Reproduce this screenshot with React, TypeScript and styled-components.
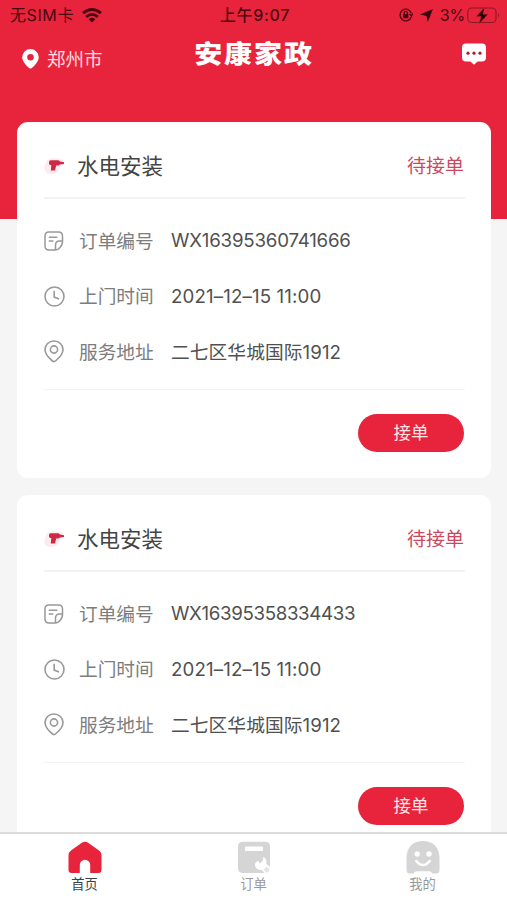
import React from 'react';
import styled, { createGlobalStyle } from 'styled-components';

const Global = createGlobalStyle`
  * { box-sizing: border-box; }
  body { margin: 0; background: #f5f5f5; overflow: hidden; font-family: Inter, "Noto Sans CJK SC", sans-serif; }
  svg { display: block; flex: none; }
`;

const Screen = styled.div`
  height: 900px;
  display: flex;
  flex-direction: column;
  overflow: hidden;
  background: linear-gradient(#e7243b 0 219px, #f5f5f5 219px);
`;
const StatusBar = styled.div`
  height: 30px;
  flex: none;
  display: grid;
  grid-template-columns: 1fr auto 1fr;
  align-items: center;
  padding: 0 7px 0 10px;
  font-size: 16px;
  line-height: 28px;
  color: #4b0711;
`;
const StatusGroup = styled.div<{ $end?: boolean }>`
  display: flex;
  align-items: center;
  justify-content: ${p => (p.$end ? 'flex-end' : 'flex-start')};
  gap: 7px;
`;
const Carrier = styled.span`
  width: 65px;
  white-space: nowrap;
  letter-spacing: 0.6px;
`;
const Charge = styled.span`
  display: flex;
  align-items: center;
  gap: 2px;
  letter-spacing: -0.2px;
`;
const Clock = styled.div`
  font-weight: 500;
  font-size: 16px;
  letter-spacing: 0.7px;
`;
const Header = styled.header`
  height: 92px;
  flex: none;
  display: grid;
  grid-template-columns: 1fr auto 1fr;
  align-items: start;
  padding: 7px 21px 0 22px;
  color: #fff;
`;
const City = styled.div`
  display: flex;
  align-items: center;
  gap: 8px;
  padding-top: 8px;
  font-size: 18.5px;
  line-height: 28px;
  color: #ffdde0;
`;
const Brand = styled.h1`
  margin: 0;
  font-size: 28px;
  line-height: 34px;
  font-weight: 900;
  letter-spacing: 1.9px;
  transform: scaleY(0.88);
`;
const Message = styled.div`
  justify-self: end;
  padding-top: 6px;
`;
const Orders = styled.main`
  flex: 1;
  min-height: 0;
  overflow: hidden;
  display: flex;
  flex-direction: column;
  gap: 17px;
  padding: 0 16px 0 17px;
`;
const Card = styled.article`
  height: 356px;
  flex: none;
  padding: 0 26px 0 27px;
  border-radius: 11px;
  background: #fff;
`;
const CardHead = styled.div`
  height: 77px;
  display: flex;
  align-items: center;
  padding-top: 13px;
  border-bottom: 2px solid #f2f2f2;
`;
const Service = styled.h2`
  flex: 1;
  margin: 0 0 0 10px;
  font-size: 21.5px;
  line-height: 32px;
  font-weight: 400;
  color: #444;
`;
const State = styled.span`
  font-size: 19px;
  padding: 0 1px 3px 0;
  color: #c94a60;
`;
const Details = styled.div`
  height: 191px;
  padding-top: 14px;
  border-bottom: 1px solid #f4f4f4;
`;
const Row = styled.div`
  height: 55.5px;
  display: grid;
  grid-template-columns: 35px 92px 1fr;
  align-items: center;
  white-space: nowrap;
  font-size: 18.7px;
`;
const Label = styled.span`
  padding-bottom: 3px;
  color: #7d7d7d;
`;
const Value = styled.span<{ $spacing: number; $cjk?: boolean }>`
  padding-bottom: ${p => (p.$cjk ? 3 : 0)}px;
  color: #505050;
  letter-spacing: ${p => p.$spacing}px;
`;
const Actions = styled.div`
  display: flex;
  justify-content: flex-end;
  padding: 24px 1px 0 0;
`;
const Accept = styled.button`
  width: 106px;
  height: 38px;
  padding: 0 0 1px;
  border: 0;
  border-radius: 19px;
  background: #e7243b;
  color: #ffe4e8;
  font: 400 17.5px/36px Inter, "Noto Sans CJK SC", sans-serif;
`;
const TabBar = styled.nav`
  height: 68px;
  flex: none;
  display: grid;
  grid-template-columns: repeat(3, 1fr);
  border-top: 2px solid #dcdcdc;
  background: #fff;
`;
const Tab = styled.a<{ $active?: boolean }>`
  display: flex;
  flex-direction: column;
  align-items: center;
  gap: 1px;
  padding-top: 7px;
  font-size: 13.3px;
  line-height: 19px;
  color: ${p => (p.$active ? '#3f3f43' : '#999')};
`;

const Wifi = () => (
  <svg width="20" height="15" viewBox="0 0 20 15" fill="none" stroke="#4b0711" strokeWidth="2.8">
    <path d="M1 5.2Q10-2.2 19 5.2M4.2 8.8Q10 4 15.8 8.8" /><path d="M10 14.5 6.6 11.2Q10 8.4 13.4 11.2Z" fill="#4b0711" stroke="none" />
  </svg>
);
const RotationLock = () => (
  <svg width="14" height="14" viewBox="0 0 14 14" fill="none" stroke="#4b0711" strokeWidth="1.3">
    <path d="M12.3 5A5.8 5.8 0 1 0 12.3 9M13.8 5.2 12.5 8 10.6 5.8" /><rect x="4.2" y="6" width="5.2" height="4.2" rx=".6" fill="#4b0711" stroke="none" /><path d="M5.2 6.5V5a1.6 1.6 0 0 1 3.2 0v1.5" />
  </svg>
);
const Location = () => <svg width="13" height="13" viewBox="0 0 13 13"><path d="M12.9.1 7.8 13 6.5 7 0 5.6Z" fill="#38040b" /></svg>;
const Battery = () => (
  <svg width="33" height="17" viewBox="0 0 33 17">
    <rect x=".8" y="1" width="28.2" height="14.5" rx="4" fill="none" stroke="#8e1727" strokeWidth="1.1" />
    <path d="M31 6Q33 8.3 31 10.5Z" fill="#8e1727" />
    <path d="M17.6.5 9.3 9.5h4.8L12 16.8 21 7.3h-5Z" fill="#250207" stroke="#e7243b" strokeWidth=".4" />
  </svg>
);
const WhitePin = () => <svg width="17" height="20" viewBox="0 0 17 20"><path fillRule="evenodd" fill="#fff" d="M8.5 0A8.3 8.3 0 0 0 .2 8.2C.2 12.6 5.3 17.7 7.5 19.2q1 .8 2 0c2.2-1.5 7.3-6.6 7.3-11A8.3 8.3 0 0 0 8.5 0Zm0 5a3.3 3.3 0 1 1 0 6.6 3.3 3.3 0 0 1 0-6.6Z" /></svg>;
const Chat = () => (
  <svg width="24" height="22" viewBox="0 0 24 22"><path fill="#fff" d="M4 .6h16q4 0 4 4v10q0 4-4 4h-4.4L12 21.8l-3.6-3.2H4q-4 0-4-4v-10q0-4 4-4Z" /><g fill="#aa1d36"><circle cx="6" cy="10.2" r="1.6" /><circle cx="12" cy="10.2" r="1.6" /><circle cx="18" cy="10.2" r="1.6" /></g></svg>
);
const Drill = () => (
  <svg width="23" height="22" viewBox="0 0 23 22"><path d="M3 5Q10 1 19 5L15 15Q12 20 4 19-1 17 1 10Z" fill="#fdecef" /><path d="M5 7q0-1.8 1.7-1.8h7.8l1.6 1.3 3.9.8v1.8l-4.2.3-1 1.2h-2.6q-.8 2.5-1 5H6.8L7.3 10H6q-1-.4-1-1.4Z" fill="#ce2945" /></svg>
);
const Note = () => <svg width="20" height="20" viewBox="0 0 20 20" fill="none" stroke="#999" strokeWidth="1.5" strokeLinecap="round" strokeLinejoin="round"><path d="M18.5 10V5Q18.5 1 14.5 1H5Q1 1 1 5v10q0 4 4 4h6.5M18.5 10h-2.8q-4.2 0-4.2 4.2V19M18.5 10q.2 3.8-2.5 6.5Q14 19 11.5 19M5.3 6.3h7.5M5.3 10h3.5" /></svg>;
const Time = () => <svg width="21" height="21" viewBox="0 0 21 21" fill="none" stroke="#999" strokeWidth="1.6"><circle cx="10.5" cy="10.5" r="9.5" /><path d="M10.2 4.7v6.4l4.8 1.8" /></svg>;
const Pin = () => <svg width="20" height="23" viewBox="0 0 20 23" fill="none" stroke="#999" strokeWidth="1.6"><path d="M10 1C4.8 1 1 4.8 1 9.6c0 4.2 3.3 8.1 7.5 11.4q1.5 1.2 3 0c4.2-3.3 7.5-7.2 7.5-11.4C19 4.8 15.2 1 10 1Z" /><circle cx="10" cy="9.5" r="3.6" /></svg>;
const Home = () => <svg width="34" height="33" viewBox="0 0 34 33"><path fill="#e7243b" d="M14.2 1.6q2.8-1.7 5.6 0L31 9.5q2.5 1.8 2.5 5V29q0 3-3 3h-8.3v-8a5.2 5.2 0 0 0-10.4 0v8H3.5q-3 0-3-3V14.5q0-3.2 2.5-5Z" /></svg>;
const OrderTab = () => (
  <svg width="34" height="33" viewBox="0 0 34 33">
    <path fill="#d5d5d5" d="M6 .8h22q5 0 5 5v20.4l-3.8-3.6q1-4.8-2.8-6.6l-.8 4-2.8 2.4-1.4-2.6q-4.5 1.5-3 6 1.4 3.6 6 3l3.2 3.2H6q-5 0-5-5V5.8q0-5 5-5Z" />
    <rect x="8" y="5.6" width="18" height="4.4" rx=".6" fill="#fff" />
    <path d="m29.5 25.5 3.2 3.1q-.8 2.2-3 3.1l-3-3Z" fill="#e4e4e4" />
  </svg>
);
const Mine = () => <svg width="34" height="33" viewBox="0 0 34 33"><path fill="#d5d5d5" d="M.5 17C.5 6.5 7 0 17 0s16.5 6.5 16.5 17v12q0 3.5-3.5 3.5h-3.5q-1.4-2.2-3.5-2.2H11q-2.1 0-3.5 2.2H4Q.5 32.5.5 29Z" /><circle cx="11.2" cy="13" r="2.7" fill="#fff" /><circle cx="23" cy="13" r="2.7" fill="#fff" /><path d="M10.3 20q6.7 8.2 13.4 0" fill="none" stroke="#fff" strokeWidth="2.5" strokeLinecap="round" /></svg>;

const orders = [
  { id: 'WX16395360741666', spacing: -0.2 },
  { id: 'WX16395358334433', spacing: -0.34 },
];

const OrderCard = ({ id, spacing }: { id: string; spacing: number }) => (
  <Card>
    <CardHead><Drill /><Service>水电安装</Service><State>待接单</State></CardHead>
    <Details>
      <Row><Note /><Label>订单编号</Label><Value $spacing={spacing}>{id}</Value></Row>
      <Row><Time /><Label>上门时间</Label><Value $spacing={0.13}>2021–12–15 11:00</Value></Row>
      <Row><Pin /><Label>服务地址</Label><Value $spacing={0.1} $cjk>二七区华城国际1912</Value></Row>
    </Details>
    <Actions><Accept>接单</Accept></Actions>
  </Card>
);

export default function App() {
  return (
    <>
      <Global />
      <Screen>
        <StatusBar>
          <StatusGroup><Carrier>无SIM卡</Carrier><Wifi /></StatusGroup>
          <Clock>上午9:07</Clock>
          <StatusGroup $end><RotationLock /><Location /><Charge>3%<Battery /></Charge></StatusGroup>
        </StatusBar>
        <Header><City><WhitePin />郑州市</City><Brand>安康家政</Brand><Message><Chat /></Message></Header>
        <Orders>{orders.map(order => <OrderCard key={order.id} {...order} />)}</Orders>
        <TabBar>
          <Tab $active><Home />首页</Tab><Tab><OrderTab />订单</Tab><Tab><Mine />我的</Tab>
        </TabBar>
      </Screen>
    </>
  );
}
